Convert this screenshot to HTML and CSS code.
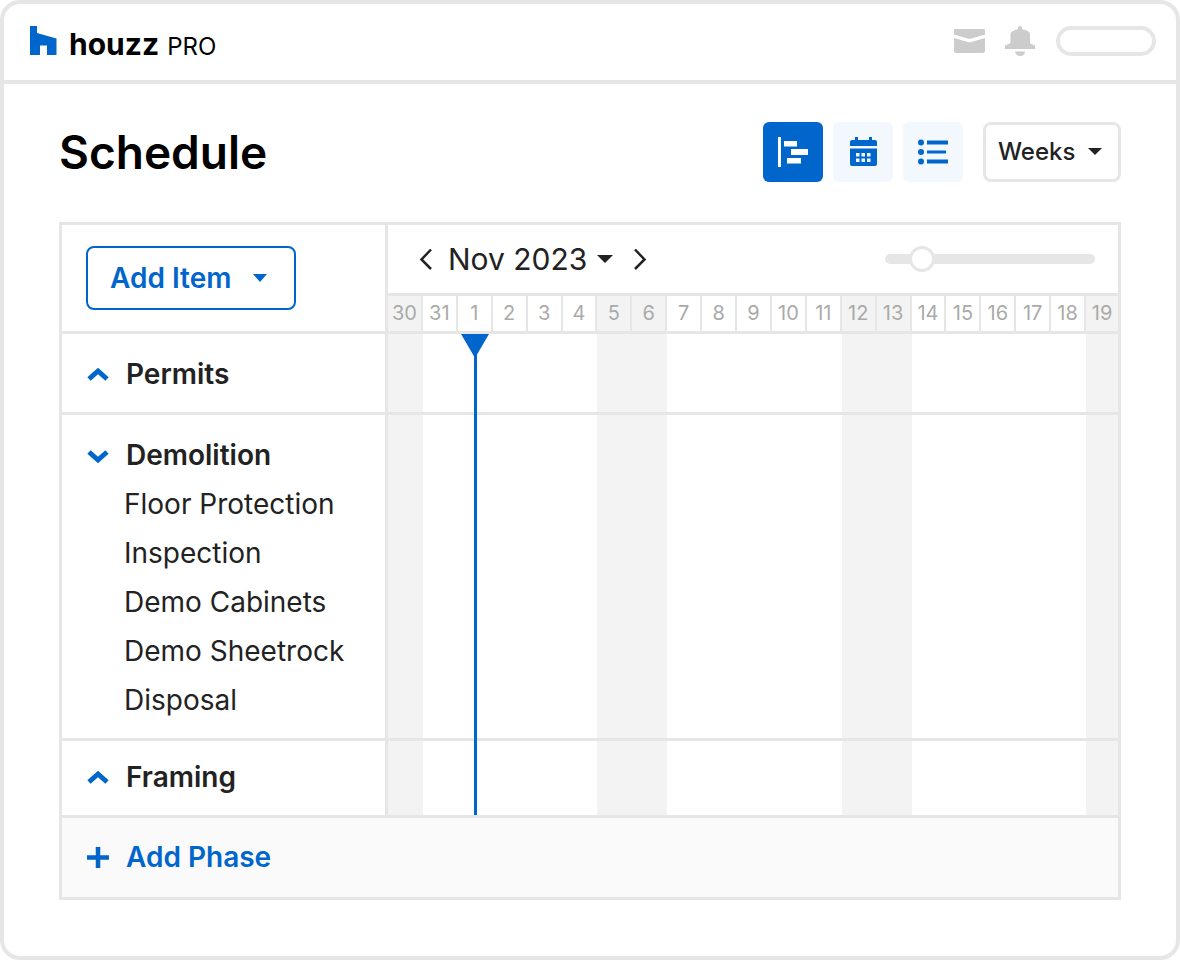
FILE: index.html
```html
<!DOCTYPE html>
<html lang="en">
<head>
<meta charset="utf-8">
<meta name="viewport" content="width=device-width, initial-scale=1">
<title>Schedule</title>
<link rel="stylesheet" href="styles.css">
</head>
<body>
<div class="app">
  <header class="topbar">
    <a class="brand" href="#">
      <svg class="brand-mark" width="27" height="30" viewBox="0 0 27 30" aria-hidden="true"><path d="M0 0h7v7l19.500 5.500V29H17V19.500h-7V29H0z" fill="#0066cc"/></svg>
      <span class="brand-text"><span class="brand-name">houzz</span> <span class="brand-tier">PRO</span></span>
    </a>
    <div class="topbar-actions">
      <button class="icon-button" type="button" aria-label="Messages">
        <svg width="31" height="24" viewBox="0 0 31 24" aria-hidden="true"><path d="M0 1q0-1 1-1h29q1 0 1 1v4.500L15.500 10 0 5.500zM0 9l15.500 4.500L31 9v13q0 2-2 2H2q-2 0-2-2z" fill="#ccc"/></svg>
      </button>
      <button class="icon-button" type="button" aria-label="Notifications">
        <svg width="30" height="30" viewBox="0 0 30 30" aria-hidden="true"><path d="M13 2q0-2 2-2t2 2v1l5.500 2Q25 6 25 8v8.500L26 18l4 1.500V23H0v-3.500L4 18l1.500-1.500V8q0-2 2.500-3l5-2zM10 25.500h10q-.5 4.500-5 4.500t-5-4.500z" fill="#ccc"/></svg>
      </button>
      <button class="account" type="button" aria-label="Account"></button>
    </div>
  </header>

  <main class="page">
    <div class="page-head">
      <h1 class="page-title">Schedule</h1>
      <div class="views">
        <button class="view view-active" type="button" aria-label="Gantt view">
          <svg width="30" height="30" viewBox="0 0 30 30" aria-hidden="true"><path d="M0 0h3v30H0zM6 4h13v5.500H6zM13 12h17v6H13zM9 21h14v5.500H9z" fill="#fff"/></svg>
        </button>
        <button class="view" type="button" aria-label="Calendar view">
          <svg width="27" height="30" viewBox="0 0 27 30" aria-hidden="true"><path fill-rule="evenodd" fill="#0066cc" d="M5 0h3v3h11V0h3v3h3q2 0 2 2v4H0V5q0-2 2-2h3zM0 11.500h27V27q0 2-2 2H2q-2 0-2-2zM6 16v3.500h3.500V16zm5.500 0v3.500H15V16zm5.500 0v3.500h3.500V16zM6 21.500V25h3.500v-3.500zm5.500 0V25H15v-3.500zm5.500 0V25h3.500v-3.500z"/></svg>
        </button>
        <button class="view" type="button" aria-label="List view">
          <svg width="31" height="26" viewBox="0 0 31 26" aria-hidden="true"><g fill="#0066cc"><circle cx="3" cy="3.500" r="3"/><circle cx="3" cy="13" r="3"/><circle cx="3" cy="22.500" r="3"/><path d="M9 1.500h21v4H9zM9 11.500h19v3H9zM9 20.500h21v4H9z"/></g></svg>
        </button>
        <label class="picker picker-scale">
          <select aria-label="Time scale"><option>Weeks</option></select>
          <svg class="caret" width="14" height="7" viewBox="0 0 14 7" aria-hidden="true"><path d="M0 0h14L7 7z" fill="#222"/></svg>
        </label>
      </div>
    </div>

    <section class="schedule" aria-label="Project schedule">
      <div class="corner">
        <button class="add-item" type="button">Add Item
          <svg width="14" height="8" viewBox="0 0 14 8" aria-hidden="true"><path d="M0 0h14L7 8z" fill="#0066cc"/></svg>
        </button>
      </div>
      <div class="timeline-head">
        <div class="month-bar">
          <div class="month-nav">
            <button class="icon-button" type="button" aria-label="Previous month">
              <svg width="14" height="22" viewBox="0 0 14 22" aria-hidden="true"><path d="M13 1.500L3.500 11.500l9.500 9.500" fill="none" stroke="#222" stroke-width="2.500"/></svg>
            </button>
            <label class="picker picker-month">
              <select aria-label="Month"><option>Nov 2023</option></select>
              <svg class="caret" width="16" height="8" viewBox="0 0 16 8" aria-hidden="true"><path d="M0 0h16L8 8z" fill="#222"/></svg>
            </label>
            <button class="icon-button" type="button" aria-label="Next month">
              <svg width="14" height="22" viewBox="0 0 14 22" aria-hidden="true"><path d="M2 1.500l9.500 10L2 21" fill="none" stroke="#222" stroke-width="2.500"/></svg>
            </button>
          </div>
          <input class="zoom" type="range" min="0" max="100" value="13" aria-label="Zoom">
        </div>
        <div class="days">
          <span class="off">30</span><span>31</span><span>1</span><span>2</span><span>3</span><span>4</span><span class="off">5</span><span class="off">6</span><span>7</span><span>8</span><span>9</span><span>10</span><span>11</span><span class="off">12</span><span class="off">13</span><span>14</span><span>15</span><span>16</span><span>17</span><span>18</span><span class="off">19</span>
        </div>
      </div>

      <div class="shading">
        <i class="off"></i><i></i><i class="today"><svg width="28" height="24" viewBox="0 0 28 24" aria-hidden="true"><path d="M0 0h28L14 24z" fill="#0066cc"/></svg></i><i></i><i></i><i></i><i class="off"></i><i class="off"></i><i></i><i></i><i></i><i></i><i></i><i class="off"></i><i class="off"></i><i></i><i></i><i></i><i></i><i></i><i class="off"></i>
      </div>

      <div class="phase phase-first">
        <button class="phase-name" type="button"><svg width="22" height="16" viewBox="0 0 22 16" aria-hidden="true"><path d="M2 12l9-8 9 8" fill="none" stroke="#0066cc" stroke-width="5"/></svg>Permits</button>
      </div>
      <div class="lane lane-first"></div>

      <div class="phase phase-open">
        <button class="phase-name" type="button"><svg width="22" height="16" viewBox="0 0 22 16" aria-hidden="true"><path d="M2 4l9 8 9-8" fill="none" stroke="#0066cc" stroke-width="5"/></svg>Demolition</button>
        <ul class="tasks">
          <li>Floor Protection</li>
          <li>Inspection</li>
          <li>Demo Cabinets</li>
          <li>Demo Sheetrock</li>
          <li>Disposal</li>
        </ul>
      </div>
      <div class="lane lane-open"></div>

      <div class="phase phase-last">
        <button class="phase-name" type="button"><svg width="22" height="16" viewBox="0 0 22 16" aria-hidden="true"><path d="M2 12l9-8 9 8" fill="none" stroke="#0066cc" stroke-width="5"/></svg>Framing</button>
      </div>
      <div class="lane lane-last"></div>

      <div class="schedule-foot">
        <button class="phase-name add-phase" type="button"><svg width="22" height="22" viewBox="0 0 22 22" aria-hidden="true"><path d="M0 10.500h22M11 0v21" stroke="#0066cc" stroke-width="4.500"/></svg>Add Phase</button>
      </div>
    </section>
  </main>
</div>
</body>
</html>
```
FILE: styles.css
```css
* { box-sizing: border-box; }

:root {
  --line: #e6e6e6;
  --shade: #f3f3f3;
  --blue: #0066cc;
  --ink: #222;
}

body {
  margin: 0;
  background: #fff;
  color: var(--ink);
  font-family: Inter, "Open Sans", "Liberation Sans", sans-serif;
  font-size: 28px;
}

button, select {
  margin: 0;
  padding: 0;
  border: 0;
  background: none;
  color: inherit;
  font: inherit;
  cursor: pointer;
}

svg { display: block; flex: none; }

.app {
  min-height: 100vh;
  border: 4px solid var(--line);
  border-radius: 20px;
}

.topbar {
  display: flex;
  align-items: center;
  justify-content: space-between;
  height: 80px;
  padding: 0 20px 2px 26px;
  border-bottom: 4px solid var(--line);
}

.brand {
  display: flex;
  align-items: center;
  gap: 12px;
  color: #000;
  text-decoration: none;
}
.brand-text { display: flex; align-items: baseline; gap: 8px; padding-top: 8px; line-height: 32px; }
.brand-name { font-size: 30px; font-weight: 700; }
.brand-tier { font-size: 24px; font-weight: 400; }

.topbar-actions { display: flex; align-items: center; gap: 20px; }
.account { width: 100px; height: 30px; border: 4px solid var(--line); border-radius: 15px; }
.topbar-actions .account { margin-left: 1px; }

.page { padding: 38px 55px 56px; }

.page-head {
  display: flex;
  align-items: center;
  justify-content: space-between;
  margin-bottom: 40px;
}
.page-title { margin: 0; color: #000; font-size: 46px; font-weight: 600; line-height: 60px; }

.views { display: flex; gap: 10px; }
.view {
  display: grid;
  place-items: center;
  width: 60px;
  height: 60px;
  border-radius: 6px;
  background: #f2f8fe;
}
.view-active { background: var(--blue); }

.picker { display: grid; align-items: center; }
.picker select { grid-area: 1 / 1; appearance: none; width: 100%; }
.picker .caret { grid-area: 1 / 1; justify-self: end; pointer-events: none; }

.picker-scale {
  width: 138px;
  height: 60px;
  margin-left: 10px;
  padding: 0 16px 2px 12px;
  border: 3px solid var(--line);
  border-radius: 8px;
  font-size: 24px;
  font-weight: 500;
}

.schedule {
  display: grid;
  grid-template-columns: 326px 1fr;
  border: 3px solid var(--line);
}

.corner { padding: 21px 24px; border-right: 3px solid var(--line); border-bottom: 3px solid var(--line); }
.add-item {
  display: flex;
  align-items: center;
  justify-content: space-between;
  width: 210px;
  height: 64px;
  padding: 0 27px 0 22px;
  border: 2px solid var(--blue);
  border-radius: 8px;
  color: var(--blue);
  font-weight: 600;
}

.timeline-head { display: flex; flex-direction: column; border-bottom: 3px solid var(--line); }
.month-bar {
  display: flex;
  flex: 1;
  align-items: center;
  justify-content: space-between;
  padding: 0 23px 0 30px;
  border-bottom: 3px solid var(--line);
}
.month-nav { display: flex; align-items: center; gap: 16px; }
.picker-month { width: 165px; margin-right: 4px; font-size: 30px; }

.zoom { appearance: none; width: 210px; height: 26px; margin: 0; background: none; }
.zoom::-webkit-slider-runnable-track { height: 10px; border-radius: 5px; background: var(--line); }
.zoom::-webkit-slider-thumb {
  appearance: none;
  width: 26px;
  height: 26px;
  margin-top: -8px;
  border: 3px solid var(--line);
  border-radius: 50%;
  background: #fff;
}

.days, .shading { display: grid; grid-template-columns: repeat(20, minmax(0, 35fr)) minmax(0, 32fr); }
.days { color: #aaa; font-size: 20px; line-height: 35px; text-align: center; }
.days span { border-right: 2px solid var(--line); }
.days span:last-child { border-right: 0; }
.off { background: var(--shade); }

.shading { grid-area: 2 / 2 / 5 / 3; margin-bottom: 3px; }
.today { display: grid; justify-content: center; background: linear-gradient(var(--blue), var(--blue)) center / 3px 100% no-repeat; z-index: 1; }

.phase, .lane { border-bottom: 3px solid var(--line); }
.phase { grid-column: 1; padding-left: 25px; border-right: 3px solid var(--line); }
.lane { grid-column: 2; }
.phase-first, .lane-first { grid-row: 2; }
.phase-open, .lane-open { grid-row: 3; }
.phase-last, .lane-last { grid-row: 4; }
.phase-first { padding-top: 16px; padding-bottom: 13px; }
.phase-open { padding-top: 16px; padding-bottom: 13px; }
.phase-last { padding-top: 12px; padding-bottom: 13px; }

.phase-name {
  display: flex;
  align-items: center;
  gap: 17px;
  font-weight: 600;
  line-height: 49px;
}
.add-phase { color: var(--blue); }

.tasks { margin: 0; padding: 0 0 0 37px; list-style: none; line-height: 49px; }

.schedule-foot { grid-column: 1 / -1; padding: 15px 25px; background: #fafafa; }
```
